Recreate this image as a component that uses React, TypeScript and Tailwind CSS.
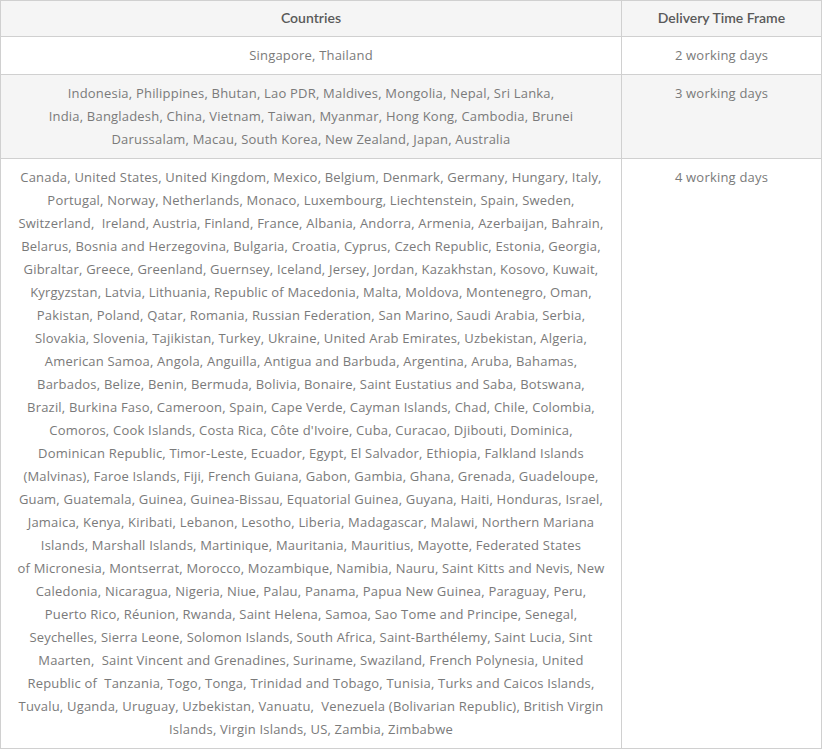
const tier1 = ["Singapore, Thailand"];

const tier2 = [
  "Indonesia, Philippines, Bhutan, Lao PDR, Maldives, Mongolia, Nepal, Sri Lanka,",
  "India, Bangladesh, China, Vietnam, Taiwan, Myanmar, Hong Kong, Cambodia, Brunei",
  "Darussalam, Macau, South Korea, New Zealand, Japan, Australia",
];

const tier3 = [
  "Canada, United States, United Kingdom, Mexico, Belgium, Denmark, Germany, Hungary, Italy,",
  "Portugal, Norway, Netherlands, Monaco, Luxembourg, Liechtenstein, Spain, Sweden,",
  "Switzerland,  Ireland, Austria, Finland, France, Albania, Andorra, Armenia, Azerbaijan, Bahrain,",
  "Belarus, Bosnia and Herzegovina, Bulgaria, Croatia, Cyprus, Czech Republic, Estonia, Georgia,",
  "Gibraltar, Greece, Greenland, Guernsey, Iceland, Jersey, Jordan, Kazakhstan, Kosovo, Kuwait,",
  "Kyrgyzstan, Latvia, Lithuania, Republic of Macedonia, Malta, Moldova, Montenegro, Oman,",
  "Pakistan, Poland, Qatar, Romania, Russian Federation, San Marino, Saudi Arabia, Serbia,",
  "Slovakia, Slovenia, Tajikistan, Turkey, Ukraine, United Arab Emirates, Uzbekistan, Algeria,",
  "American Samoa, Angola, Anguilla, Antigua and Barbuda, Argentina, Aruba, Bahamas,",
  "Barbados, Belize, Benin, Bermuda, Bolivia, Bonaire, Saint Eustatius and Saba, Botswana,",
  "Brazil, Burkina Faso, Cameroon, Spain, Cape Verde, Cayman Islands, Chad, Chile, Colombia,",
  "Comoros, Cook Islands, Costa Rica, Côte d'Ivoire, Cuba, Curacao, Djibouti, Dominica,",
  "Dominican Republic, Timor-Leste, Ecuador, Egypt, El Salvador, Ethiopia, Falkland Islands",
  "(Malvinas), Faroe Islands, Fiji, French Guiana, Gabon, Gambia, Ghana, Grenada, Guadeloupe,",
  "Guam, Guatemala, Guinea, Guinea-Bissau, Equatorial Guinea, Guyana, Haiti, Honduras, Israel,",
  "Jamaica, Kenya, Kiribati, Lebanon, Lesotho, Liberia, Madagascar, Malawi, Northern Mariana",
  "Islands, Marshall Islands, Martinique, Mauritania, Mauritius, Mayotte, Federated States",
  "of Micronesia, Montserrat, Morocco, Mozambique, Namibia, Nauru, Saint Kitts and Nevis, New",
  "Caledonia, Nicaragua, Nigeria, Niue, Palau, Panama, Papua New Guinea, Paraguay, Peru,",
  "Puerto Rico, Réunion, Rwanda, Saint Helena, Samoa, Sao Tome and Principe, Senegal,",
  "Seychelles, Sierra Leone, Solomon Islands, South Africa, Saint-Barthélemy, Saint Lucia, Sint",
  "Maarten,  Saint Vincent and Grenadines, Suriname, Swaziland, French Polynesia, United",
  "Republic of  Tanzania, Togo, Tonga, Trinidad and Tobago, Tunisia, Turks and Caicos Islands,",
  "Tuvalu, Uganda, Uruguay, Uzbekistan, Vanuatu,  Venezuela (Bolivarian Republic), British Virgin",
  "Islands, Virgin Islands, US, Zambia, Zimbabwe",
];

const rows = [
  { lines: tier1, days: "2 working days", striped: false },
  { lines: tier2, days: "3 working days", striped: true },
  { lines: tier3, days: "4 working days", striped: false },
];

export default function App() {
  return (
    <div className="bg-white w-[822px] h-[750px] font-['Open_Sans',sans-serif]">
      <table className="w-[822px] border-collapse table-fixed text-[13px] leading-[23px] tracking-[0.2px] text-[#7a7a7a]">
        <colgroup>
          <col className="w-[621px]" />
          <col />
        </colgroup>
        <thead>
          <tr className="bg-[#f5f5f5]">
            <th className="border border-[#d0d0d0] h-[36px] px-2 pb-[2px] font-['Lato',sans-serif] text-[14px] font-semibold tracking-normal text-[#5a5a5a] text-center">
              Countries
            </th>
            <th className="border border-[#d0d0d0] h-[36px] px-2 pb-[2px] font-['Lato',sans-serif] text-[14px] font-semibold tracking-normal text-[#5a5a5a] text-center">
              Delivery Time Frame
            </th>
          </tr>
        </thead>
        <tbody>
          {rows.map((row) => (
            <tr key={row.days} className={row.striped ? "bg-[#f5f5f5]" : "bg-white"}>
              <td className="border border-[#d0d0d0] px-2 py-[7px] align-top text-center">
                {row.lines.map((line) => (
                  <span key={line} className="block whitespace-pre">
                    {line}
                  </span>
                ))}
              </td>
              <td className="border border-[#d0d0d0] px-2 py-[7px] align-top text-center">
                {row.days}
              </td>
            </tr>
          ))}
        </tbody>
      </table>
    </div>
  );
}
